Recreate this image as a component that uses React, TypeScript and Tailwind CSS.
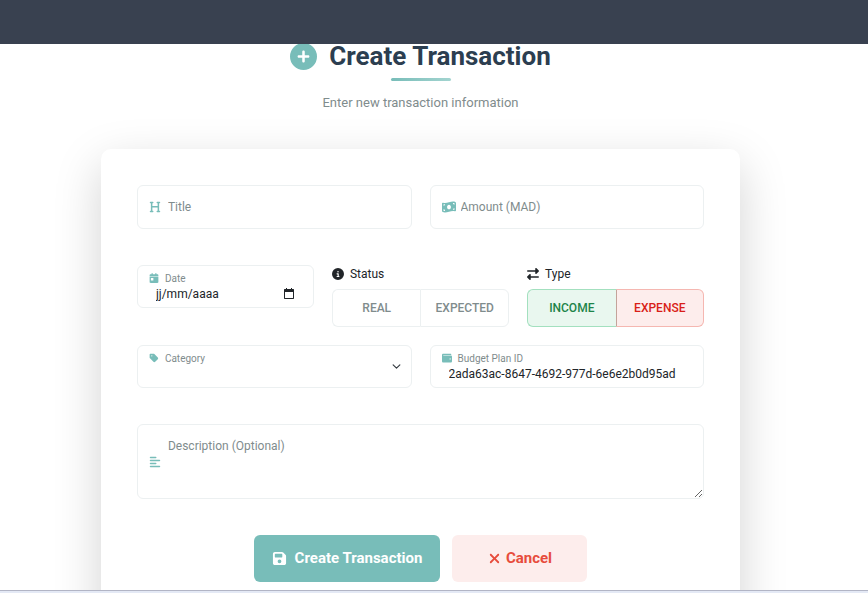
import type { ReactNode } from 'react';
import {
  FaAlignLeft,
  FaCalendarDay,
  FaCircleInfo,
  FaCirclePlus,
  FaFloppyDisk,
  FaHeading,
  FaMoneyBillWave,
  FaRightLeft,
  FaTag,
  FaWallet,
  FaXmark,
} from 'react-icons/fa6';

const box = 'rounded-md border border-[#ecf0f1] bg-white';

function InlineField({ id, label, icon }: { id: string; label: string; icon: ReactNode }) {
  return (
    <div className={`${box} flex h-11 items-center pr-3 pl-[11px]`}>
      <label htmlFor={id} className="flex w-[19px] shrink-0 text-[#78bdb9]" aria-label={label}>
        {icon}
      </label>
      <input
        id={id}
        type="text"
        placeholder={label}
        className="w-full min-w-0 bg-transparent text-xs text-[#212529] outline-none placeholder:text-[#7f8c8d]"
      />
    </div>
  );
}

function FloatingField({ id, label, icon, children }: { id: string; label: string; icon: ReactNode; children?: ReactNode }) {
  return (
    <div className={`${box} flex h-[43px] flex-col px-[11px] pt-1`}>
      <label htmlFor={id} className="flex h-4 items-center text-[10px] text-[#7f8c8d]">
        <span className="mr-1.5 flex text-[#78bdb9]">{icon}</span>
        {label}
      </label>
      {children}
    </div>
  );
}

function Toggle({ name, label, icon, children }: { name: string; label: string; icon: ReactNode; children: ReactNode }) {
  return (
    <div role="group" aria-labelledby={name}>
      <div id={name} className="flex h-[18px] items-center gap-1.5 text-xs text-[#212529]">
        {icon}
        {label}
      </div>
      <div className="mt-1.5 grid h-[38px] grid-cols-2 text-xs font-medium">{children}</div>
    </div>
  );
}

export default function App() {
  return (
    <div className="flex h-screen flex-col bg-white font-[Roboto,sans-serif] text-[#212529]">
      <header className="relative z-10 h-11 shrink-0 bg-[#394150]" />

      <main className="min-h-0 flex-1 overflow-hidden pr-[27px]">
        <div className="flex flex-col items-center">
          <h1 className="flex h-6 items-center gap-3 text-[26px] leading-6 font-bold text-[#2c3e50]">
            <FaCirclePlus className="size-[27px] text-[#78bdb9]" />
            Create Transaction
          </h1>
          <div className="mt-2.5 h-[3px] w-[60px] rounded-sm bg-linear-to-r from-[#78bdb9] to-[#a3d4d0]" />
          <p className="mt-3 text-[13px] leading-5 text-[#7f8c8d]">Enter new transaction information</p>
        </div>

        <form
          className="mx-auto mt-9 h-[600px] w-19/25 rounded-[10px] bg-white p-9 shadow-[0_16px_48px_rgba(0,0,0,0.175)]"
          onSubmit={(e) => e.preventDefault()}
        >
          <div className="grid grid-cols-2 gap-[18px]">
            <InlineField id="title" label="Title" icon={<FaHeading className="size-3" />} />
            <InlineField id="amount" label="Amount (MAD)" icon={<FaMoneyBillWave className="size-3.5" />} />
          </div>

          <div className="mt-9 grid grid-cols-3 gap-[18px]">
            <FloatingField id="date" label="Date" icon={<FaCalendarDay className="size-2.5" />}>
              <div className="flex items-center justify-between px-[7px]">
                <input
                  id="date"
                  type="text"
                  placeholder="jj/mm/aaaa"
                  className="w-24 min-w-0 bg-transparent text-xs outline-none placeholder:text-[#212529]"
                />
                <button type="button" aria-label="Open calendar">
                  <svg viewBox="0 0 12 12" className="size-3" fill="currentColor">
                    <path fillRule="evenodd" d="M3 1V0h1v1h4V0h1v1h1.5l.5.5v9l-.5.5h-9l-.5-.5v-9l.5-.5H3ZM2 4v6h8V4H2Z" />
                  </svg>
                </button>
              </div>
            </FloatingField>

            <Toggle name="status" label="Status" icon={<FaCircleInfo className="size-3" />}>
              <button type="button" className="rounded-l-md border border-r-0 border-[#ecf0f1] text-[#7f8c8d]">REAL</button>
              <button type="button" className="rounded-r-md border border-[#ecf0f1] text-[#7f8c8d]">EXPECTED</button>
            </Toggle>

            <Toggle name="type" label="Type" icon={<FaRightLeft className="size-3" />}>
              <button type="button" className="rounded-l-md border border-r-0 border-[#a3e0bf] bg-[#e9f7ef] text-[#1e8449]">INCOME</button>
              <button type="button" className="rounded-r-md border border-[#f5b7b1] border-l-[#c4a39a] bg-[#fdedec] text-[#d91e18]">EXPENSE</button>
            </Toggle>
          </div>

          <div className="mt-[18px] grid grid-cols-2 gap-[18px]">
            <div className={`${box} grid h-[43px]`}>
              <label htmlFor="category" className="pointer-events-none z-10 col-start-1 row-start-1 mt-1 flex h-4 items-center px-[11px] text-[10px] text-[#7f8c8d]">
                <FaTag className="mr-1.5 size-2.5 text-[#78bdb9]" />
                Category
              </label>
              <select id="category" className="col-start-1 row-start-1 appearance-none bg-transparent text-xs outline-none" />
              <svg viewBox="0 0 16 16" className="pointer-events-none col-start-1 row-start-1 mr-2.5 size-[9px] self-center justify-self-end" fill="none" stroke="#343a40" strokeWidth="2" strokeLinecap="round" strokeLinejoin="round">
                <path d="m2 5 6 6 6-6" />
              </svg>
            </div>
            <FloatingField id="plan" label="Budget Plan ID" icon={<FaWallet className="size-2.5" />}>
              <input id="plan" type="text" defaultValue="2ada63ac-8647-4692-977d-6e6e2b0d95ad" className="w-full bg-transparent pl-[7px] text-xs outline-none" />
            </FloatingField>
          </div>

          <div className={`${box} mt-9 flex h-[75px]`}>
            <label htmlFor="description" aria-label="Description" className="flex w-[30px] shrink-0 items-center pl-[11px] text-[#78bdb9]">
              <FaAlignLeft className="size-3" />
            </label>
            <textarea
              id="description"
              placeholder="Description (Optional)"
              className="block h-full w-full resize-y bg-transparent pt-3 text-xs leading-[18px] outline-none placeholder:text-[#7f8c8d]"
            />
          </div>

          <div className="mt-9 flex justify-center gap-3 text-[15px] font-bold">
            <button type="submit" className="flex h-[47px] w-[186px] items-center justify-center gap-2 rounded-md bg-[#78bdb9] text-white">
              <FaFloppyDisk className="size-[15px]" />
              Create Transaction
            </button>
            <button type="button" className="flex h-[47px] w-[135px] items-center justify-center gap-1 rounded-md bg-[#fdedec] text-[#e74c3c]">
              <FaXmark className="size-[15px]" />
              Cancel
            </button>
          </div>
        </form>
      </main>

      <footer className="h-[3px] shrink-0 border-t border-[#b2b5c5] bg-[#e4e9f5]" />
    </div>
  );
}
